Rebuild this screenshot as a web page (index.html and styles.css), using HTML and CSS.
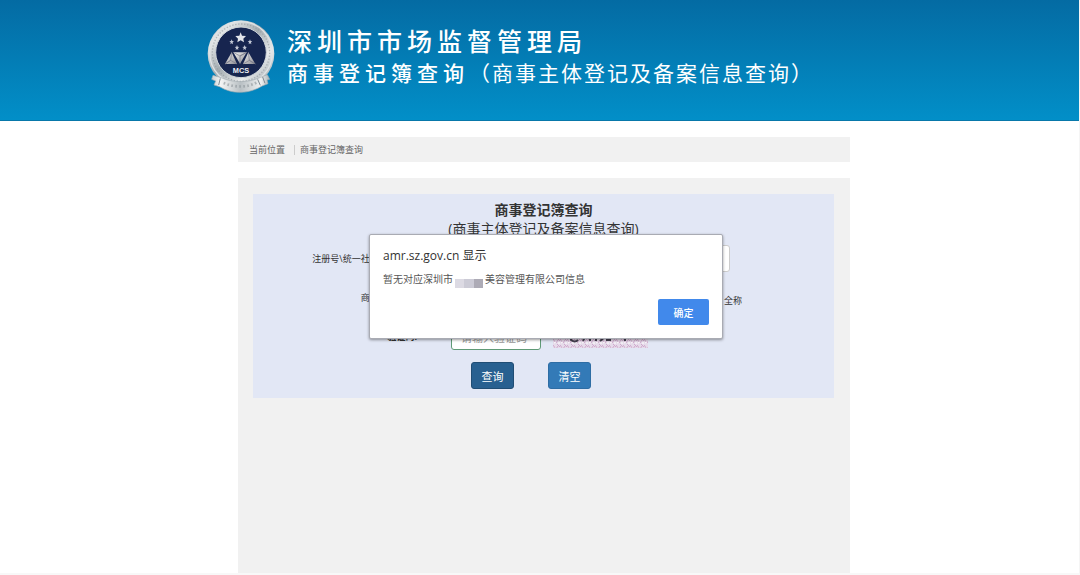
FILE: index.html
```html
<!DOCTYPE html>
<html lang="zh-CN">
<head>
  <meta charset="UTF-8">
  <meta name="viewport" content="width=device-width, initial-scale=1.0">
  <title>商事登记簿查询</title>
  <link rel="stylesheet" href="styles.css">
</head>
<body>
  <header class="header">
    <div class="header-inner">
      <svg class="logo" viewBox="36 29 204 222" aria-hidden="true">
        <defs>
          <linearGradient id="silver" x1="0" y1="0" x2="1" y2="1">
            <stop offset="0" stop-color="#8f979c"/>
            <stop offset=".2" stop-color="#e4e7e8"/>
            <stop offset=".45" stop-color="#a3abb0"/>
            <stop offset=".7" stop-color="#e9ebec"/>
            <stop offset="1" stop-color="#8b969d"/>
          </linearGradient>
          <linearGradient id="ribbon" x1="0" y1="0" x2="1" y2="0">
            <stop offset="0" stop-color="#c9cfd2"/>
            <stop offset=".15" stop-color="#f4f5f5"/>
            <stop offset=".5" stop-color="#b9c0c4"/>
            <stop offset=".85" stop-color="#eff1f1"/>
            <stop offset="1" stop-color="#a9b2b8"/>
          </linearGradient>
          <linearGradient id="steel" x1="0" y1="0" x2="1" y2="1">
            <stop offset="0" stop-color="#f5f5f5"/>
            <stop offset="1" stop-color="#8b8b92"/>
          </linearGradient>
        </defs>
        <circle cx="138" cy="130" r="100" fill="url(#silver)"/>
        <circle cx="138" cy="128" r="94" fill="none" stroke="#dfe3e5" stroke-width="4"/>
        <circle cx="138" cy="127" r="86" fill="none" stroke="#8d969b" stroke-width="4" stroke-dasharray="4 5" opacity=".6"/>
        <circle cx="138" cy="126" r="76" fill="#17254f" stroke="#d3d8dc" stroke-width="3"/>
        <path d="M137 66l4 10 12 1-8 8 2 11-10-6-10 6 2-11-8-8 12-1z" fill="#e3e5eb"/>
        <g fill="#c3c8d6">
          <path id="star" d="M110 87l2 5 5 1-4 3 1 6-4-3-4 3 1-6-4-3 5-1z"/>
          <use href="#star" x="55"/>
          <use href="#star" x="16" y="17"/>
          <use href="#star" x="39" y="17"/>
        </g>
        <g fill="url(#steel)">
          <path d="M110 126L90 161h36z"/>
          <path d="M160 126l-16 35h37z"/>
          <path d="M115 126h40l-20 34z"/>
        </g>
        <path d="M110 126l-3 24-17 11 17-11 19 11M160 126l3 24 18 11-18-11-19 11M115 126l20 11 20-11-20 11v23" fill="none" stroke="#77798a" stroke-width="2"/>
        <text class="logo-text" x="138" y="188" text-anchor="middle">MCS</text>
        <path d="M54 195l24 7c38 16 80 16 119-1l20-8 7 14-8 2 3 11-18 7c-39 24-88 26-127 2l-17-5 5-12-12-5z" fill="url(#ribbon)" stroke="#a3acb1" stroke-width="2"/>
        <path d="M86 218c33 14 71 14 98-1" fill="none" stroke="#8a9398" stroke-width="8" stroke-dasharray="5 7" opacity=".6"/>
        <path d="M188 207l8 18M203 200l7 19M76 204l-5 20" stroke="#808b92" stroke-width="3"/>
      </svg>
      <div class="titles">
        <h1>深圳市市场监督管理局</h1>
        <p><strong>商事登记簿查询</strong><span>（商事主体登记及备案信息查询）</span></p>
      </div>
    </div>
  </header>

  <main class="main">
    <nav class="crumb">
      <span>当前位置</span>
      <a href="#">商事登记簿查询</a>
    </nav>

    <section class="panel">
      <form class="search">
        <h2>商事登记簿查询</h2>
        <p class="subtitle">(商事主体登记及备案信息查询)</p>

        <div class="row">
          <label for="regNo">注册号\统一社会信用代码:</label>
          <input class="field" type="text" id="regNo">
        </div>
        <div class="row">
          <label for="entName">商事主体名称:</label>
          <div class="name-group">
            <input class="field" type="text" id="entName">
            <input type="radio" id="full" name="match" checked>
            <label for="full">全称</label>
          </div>
        </div>
        <div class="row">
          <label class="strong" for="code">验证码:</label>
          <div class="code-group">
            <input class="field valid" type="text" id="code" placeholder="请输入验证码">
            <svg class="captcha" viewBox="0 0 95 22" aria-hidden="true">
              <defs>
                <pattern id="noise" width="7" height="6" patternUnits="userSpaceOnUse">
                  <path d="M0 1l3 4M4 0l3 3M3 5l2-3" stroke="#cfa9cc" fill="none"/>
                  <path d="M1 5l2-1M5 5h2" stroke="#fff"/>
                </pattern>
              </defs>
              <rect width="95" height="22" fill="#e6dbea"/>
              <rect width="95" height="22" fill="url(#noise)"/>
              <path d="M18 8v6q4 3 7 0M30 15l4-9M37 6v9M43 6v9M47 6q8 4 0 9M53 14h5M72 6v9" fill="none" stroke="#454050" stroke-width="2"/>
            </svg>
          </div>
        </div>
        <div class="actions">
          <button class="btn active" type="submit">查询</button>
          <button class="btn" type="reset">清空</button>
        </div>
      </form>
    </section>

    <div class="alert" role="alertdialog" aria-labelledby="alertTitle">
      <h3 id="alertTitle">amr.sz.gov.cn 显示</h3>
      <p>暂无对应深圳市<span class="mask"><i></i><i></i><i></i></span>美容管理有限公司信息</p>
      <button class="ok" type="button">确定</button>
    </div>
  </main>
</body>
</html>
```
FILE: styles.css
```css
* { box-sizing: border-box; margin: 0; padding: 0; }

body {
  display: flex;
  flex-direction: column;
  min-height: 100vh;
  border-right: 1px solid #f5f5f5;
  border-bottom: 2px solid #f8f8f8;
  background: #fff;
  color: #333;
  font-family: "Open Sans", "Noto Sans CJK SC", sans-serif;
  font-size: 9px;
}

/* header */
.header {
  height: 121px;
  padding-top: 20px;
  background: linear-gradient(#046ba3, #028fc8);
  border-bottom: 1px solid #0878aa;
}
.header-inner {
  display: flex;
  gap: 12px;
  max-width: 665px;
  margin: 0 auto;
}
.logo { width: 68px; height: 74px; flex: none; }
.logo-text { font: bold 22px "Liberation Sans", sans-serif; fill: #eef0f5; }
.titles {
  padding-top: 4px;
  color: #fff;
  font-family: "Noto Sans CJK SC", serif;
  white-space: nowrap;
}
.titles h1 {
  font-size: 25px;
  line-height: 32px;
  font-weight: 500;
  letter-spacing: 5px;
}
.titles p { font-size: 21px; line-height: 32px; }
.titles strong { font-weight: 500; letter-spacing: 5px; }
.titles span { font-weight: 400; letter-spacing: 2px; }

/* content */
.main {
  position: relative;
  display: flex;
  flex-direction: column;
  flex: 1;
  gap: 16px;
  width: 100%;
  max-width: 621px;
  margin: 0 auto;
  padding: 16px 0 0 9px;
}
.crumb {
  display: flex;
  align-items: center;
  height: 25px;
  padding: 0 11px;
  background: #f1f1f1;
  color: #666;
}
.crumb a {
  margin-left: 9px;
  padding-left: 5px;
  border-left: 1px solid #ccc;
  color: #666;
  line-height: 10px;
  text-decoration: none;
}
.panel { flex: 1; padding: 16px 16px 16px 15px; background: #f1f1f1; }

.search { padding: 6px 0 9px; background: #e2e7f5; }
.search h2,
.subtitle {
  font-size: 14px;
  line-height: 19px;
  text-align: center;
}
.subtitle { margin-bottom: 7px; }
.row {
  display: flex;
  align-items: center;
  gap: 34px;
  height: 27px;
  margin-bottom: 12px;
}
.row > label { width: 164px; text-align: right; white-space: nowrap; }
.row .strong { font-weight: bold; }
.field {
  width: 279px;
  height: 27px;
  padding: 0 9px;
  border: 1px solid #ccc;
  border-radius: 3px;
  background: #fff;
  font: 11px "Noto Sans CJK SC", sans-serif;
}
.field::placeholder { color: #999; }
.name-group,
.code-group { display: flex; align-items: center; gap: 12px; }
.name-group { gap: 5px; }
.name-group .field { width: 250px; }
.name-group label { margin-top: 6px; }
.code-group .field { width: 90px; }
.code-group .valid { border-color: #5f9a76; }
.captcha { width: 95px; height: 22px; }

.actions { display: flex; gap: 34px; padding-left: 218px; }
.btn {
  width: 43px;
  height: 27px;
  border: 1px solid #2e6da4;
  border-radius: 3px;
  background: #337ab7;
  color: #fff;
  font: 11px "Noto Sans CJK SC", sans-serif;
}
.btn.active { background: #286090; border-color: #204d74; }

/* browser alert over the form */
.alert {
  position: absolute;
  top: 113px;
  left: 140px;
  display: flex;
  flex-direction: column;
  width: 354px;
  height: 105px;
  padding: 12px 13px;
  border: 1px solid #a9abb3;
  border-radius: 2px;
  background: #fff;
  box-shadow: 0 1px 3px rgba(0, 0, 0, 0.4);
}
.alert h3 { font-size: 12px; font-weight: 400; line-height: 18px; }
.alert p {
  display: flex;
  margin-top: 5px;
  color: #555;
  font-size: 10px;
  line-height: 18px;
}
.mask { display: flex; align-items: flex-end; width: 32px; padding: 0 2px; }
.mask i { width: 10px; height: 9px; background: #dcdae3; }
.mask i:nth-child(2) { background: #cccbd6; }
.mask i:nth-child(3) { background: #adabb6; }
.ok {
  align-self: flex-end;
  width: 51px;
  height: 26px;
  margin-top: 11px;
  border: 0;
  border-radius: 2px;
  background: #4189eb;
  color: #fff;
  font: 500 10px "Noto Sans CJK SC", sans-serif;
}
```
